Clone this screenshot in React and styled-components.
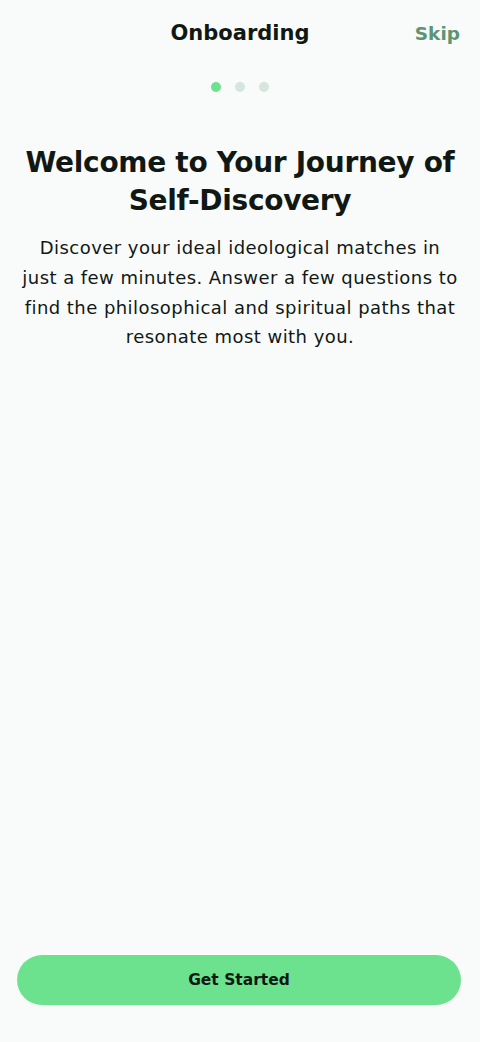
import React from 'react';
import styled, { createGlobalStyle } from 'styled-components';

const GlobalStyle = createGlobalStyle`
  html, body {
    margin: 0;
    padding: 0;
    background: #f8fbfa;
  }
  * {
    box-sizing: border-box;
  }
`;

const Screen = styled.div`
  display: flex;
  flex-direction: column;
  min-height: 100vh;
  background: #f8fbfa;
  font-family: 'DejaVu Sans', 'Noto Sans', sans-serif;
  color: #111814;
`;

const Header = styled.header`
  display: grid;
  grid-template-columns: 60px 1fr 60px;
  align-items: center;
  height: 66px;
  padding: 0 20px 0 20px;
`;

const HeaderTitle = styled.h1`
  margin: 0;
  grid-column: 2;
  text-align: center;
  font-size: 21px;
  font-weight: 700;
  letter-spacing: 0;
`;

const SkipLink = styled.button`
  justify-self: end;
  border: none;
  background: none;
  padding: 0;
  font-family: inherit;
  font-size: 18.5px;
  font-weight: 700;
  color: #5d9474;
  cursor: pointer;
`;

const Dots = styled.div`
  display: flex;
  justify-content: center;
  gap: 14px;
  padding: 16px 0;
`;

const Dot = styled.span`
  width: 10px;
  height: 10px;
  border-radius: 50%;
  background: ${(p) => (p.$active ? '#6ce28f' : '#d5e6dc')};
`;

const Content = styled.section`
  display: flex;
  flex-direction: column;
  align-items: center;
  gap: 14px;
  padding: 36px 16px 0;
  text-align: center;
`;

const Title = styled.h2`
  margin: 0;
  font-size: 28px;
  line-height: 37.5px;
  font-weight: 700;
  letter-spacing: -0.3px;
`;

const Body = styled.p`
  margin: 0;
  font-size: 18px;
  line-height: 29.8px;
  font-weight: 400;
  letter-spacing: 0.45px;
`;

const Spacer = styled.div`
  flex: 1;
`;

const Footer = styled.footer`
  padding: 0 19px 37px 17px;
`;

const PrimaryButton = styled.button`
  width: 100%;
  height: 50px;
  border: none;
  border-radius: 25px;
  background: #6ce28f;
  color: #111814;
  font-family: inherit;
  font-size: 15.5px;
  font-weight: 700;
  cursor: pointer;
`;

const App = () => {
  const steps = [true, false, false];

  return (
    <Screen>
      <GlobalStyle />
      <Header>
        <HeaderTitle>Onboarding</HeaderTitle>
        <SkipLink>Skip</SkipLink>
      </Header>
      <Dots>
        {steps.map((active, i) => (
          <Dot key={i} $active={active} />
        ))}
      </Dots>
      <Content>
        <Title>
          Welcome to Your Journey of
          <br />
          Self-Discovery
        </Title>
        <Body>
          Discover your ideal ideological matches in
          <br />
          just a few minutes. Answer a few questions to
          <br />
          find the philosophical and spiritual paths that
          <br />
          resonate most with you.
        </Body>
      </Content>
      <Spacer />
      <Footer>
        <PrimaryButton>Get Started</PrimaryButton>
      </Footer>
    </Screen>
  );
};

export default App;
